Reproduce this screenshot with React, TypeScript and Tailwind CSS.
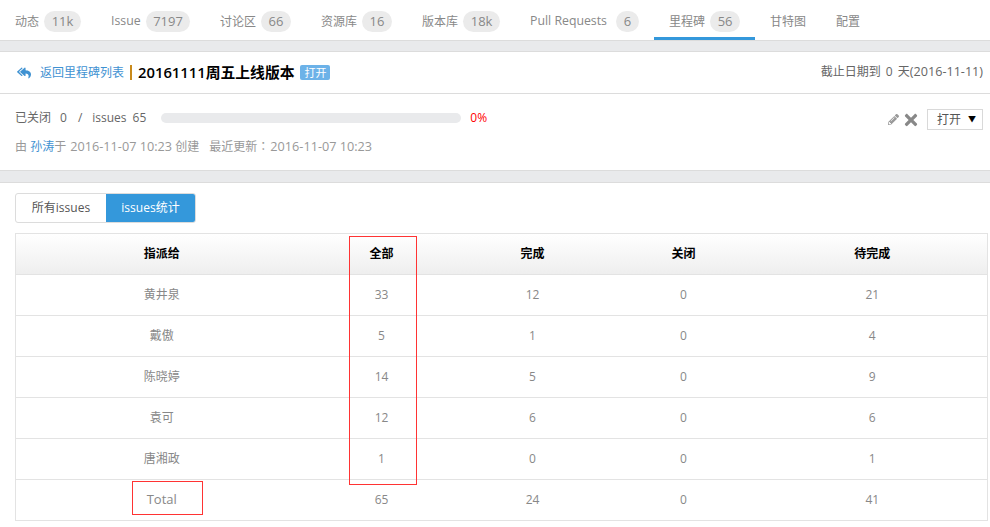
import { FaPencilAlt, FaReplyAll, FaTimes } from "react-icons/fa";

const font = "font-['Open_Sans','Noto_Sans_CJK_SC',sans-serif]";

const tabs = [
  { label: "动态", count: "11k", badge: "w-[37px]" },
  { label: "Issue", count: "7197", badge: "w-[44px]" },
  { label: "讨论区", count: "66", badge: "w-[30px]" },
  { label: "资源库", count: "16", badge: "w-[30px]" },
  { label: "版本库", count: "18k", badge: "w-[37px]" },
  { label: "Pull Requests", count: "6", badge: "w-[23px]" },
  { label: "里程碑", count: "56", badge: "w-[30px]", active: true },
  { label: "甘特图" },
  { label: "配置" },
];

const rows = [
  ["黄井泉", "33", "12", "0", "21"],
  ["戴傲", "5", "1", "0", "4"],
  ["陈晓婷", "14", "5", "0", "9"],
  ["袁可", "12", "6", "0", "6"],
  ["唐湘政", "1", "0", "0", "1"],
  ["Total", "65", "24", "0", "41"],
];

const headers = ["指派给", "全部", "完成", "关闭", "待完成"];

function Tabs() {
  return (
    <nav className="flex h-[41px] border-b border-[#dcdcdc] pl-[15px] text-xs text-[#888]">
      {tabs.map((t) => (
        <div
          key={t.label}
          className={
            t.active
              ? "-ml-[15px] mr-[15px] flex h-10 w-[101px] items-center gap-[5px] border-b-[3px] border-[#3498db] pt-[6px] pl-[15px]"
              : "mr-[30px] flex h-10 items-center gap-[5px] pt-[3px]"
          }
        >
          {t.label === "Pull Requests" ? (
            <span className="mr-1 w-[77px] text-[12.3px]">{t.label}</span>
          ) : t.label === "Issue" ? (
            <span className="w-[30px] text-[12.3px]">{t.label}</span>
          ) : (
            <span>{t.label}</span>
          )}
          {t.count && (
            <span className={`flex h-[21px] items-center justify-center rounded-full bg-[#ebebeb] text-[13px] ${t.badge}`}>
              {t.count}
            </span>
          )}
        </div>
      ))}
    </nav>
  );
}

function Header() {
  return (
    <div className="flex h-[43px] items-center justify-between border-y border-[#dcdcdc] pl-[17px] pr-[7px]">
      <div className="flex items-center">
        <FaReplyAll size={14} className="mr-[9px] text-[#3f92d2]" />
        <a className="text-xs text-[#3f92d2]">返回里程碑列表</a>
        <span className="ml-[6px] mr-[6px] h-[15px] w-[2px] bg-[#c98a1b]" />
        <h1 className="text-[14.8px] font-semibold text-black">20161111周五上线版本</h1>
        <span className="ml-[6px] rounded-[2px] bg-[#6cb2e8] px-1 text-[11px] leading-[15px] text-white">打开</span>
      </div>
      <div className="text-xs text-[#666]">
        截止日期到 <span className="mx-[2px]">0</span> 天<span className="text-[12.6px]">(2016-11-11)</span>
      </div>
    </div>
  );
}

function Summary() {
  return (
    <section className="relative h-[76px] pl-[15px] pr-[7px] text-xs">
      <div className="flex items-center pt-[16px] text-[#666]">
        <span>已关闭</span>
        <span className="ml-[9px]">0</span>
        <span className="ml-[11px] mr-[10px]">/</span>
        <span>issues</span>
        <span className="ml-[6px]">65</span>
        <div className="ml-[15px] h-[10px] w-[300px] rounded-full bg-[#e9eaec]" />
        <span className="ml-[9px] text-[#f00]">0%</span>
      </div>
      <p className="mt-[12px] text-[#999]">
        由 <a className="text-[#3f92d2]">孙涛</a>于 <span className="ml-[1px] text-[12.7px]">2016-11-07 10:23</span> 创建
        <span className="ml-[10px]">最近更新</span>
        <span className="font-['Noto_Sans_CJK_TC']">：</span>
        <span className="ml-[1px] text-[12.7px]">2016-11-07 10:23</span>
      </p>
      <div className="absolute right-[7px] top-[15px] flex items-center">
        <FaPencilAlt size={11} className="mr-[3px] text-[#999]" />
        <FaTimes size={18} className="mr-[7px] text-[#888]" />
        <div className="flex h-[21px] w-14 items-center justify-between border border-[#d9d9d9] pl-[9px] pr-[6px] text-xs text-[#555]">
          打开 <span className="text-[8px] text-black">▼</span>
        </div>
      </div>
    </section>
  );
}

function StatsTable() {
  return (
    <table className="w-[972px] table-fixed border-collapse text-xs text-[#888]">
      <colgroup>
        <col className="w-[292px]" />
        <col className="w-[148px]" />
        <col className="w-[154px]" />
        <col className="w-[148px]" />
        <col className="w-[230px]" />
      </colgroup>
      <thead>
        <tr className="h-[41px] bg-gradient-to-b from-white to-[#eeeeee]">
          {headers.map((h) => (
            <th key={h} className="border border-x-0 border-[#e3e3e3] font-bold text-black first:border-l last:border-r">
              {h}
            </th>
          ))}
        </tr>
      </thead>
      <tbody>
        {rows.map((r) => (
          <tr key={r[0]} className="h-[41px]">
            {r.map((c, i) => (
              <td
                key={i}
                className={
                  c === "Total"
                    ? "border border-x-0 border-[#e3e3e3] text-center text-[13px] first:border-l last:border-r"
                    : "border border-x-0 border-[#e3e3e3] text-center first:border-l last:border-r"
                }
              >
                {c}
              </td>
            ))}
          </tr>
        ))}
      </tbody>
    </table>
  );
}

export default function App() {
  return (
    <div className={`relative h-[527px] w-[990px] overflow-hidden bg-white ${font}`}>
      <Tabs />
      <div className="h-[10px] bg-[#e9eaec]" />
      <Header />
      <Summary />
      <div className="h-[13px] border-y border-[#dcdcdc] bg-[#e9eaec]" />
      <div className="px-[15px] pt-[10px]">
        <div className="mb-[10px] flex h-[30px] w-[181px] overflow-hidden rounded-[3px] border border-[#dcdcdc] text-xs">
          <div className="flex w-[90px] items-center justify-center text-[#555]">所有issues</div>
          <div className="flex flex-1 items-center justify-center bg-[#3498db] text-white">issues统计</div>
        </div>
        <StatsTable />
      </div>
      <div className="absolute left-[349px] top-[236px] h-[249px] w-[68px] border border-[#f33]" />
      <div className="absolute left-[132px] top-[481px] h-[34px] w-[71px] border border-[#f33]" />
    </div>
  );
}
